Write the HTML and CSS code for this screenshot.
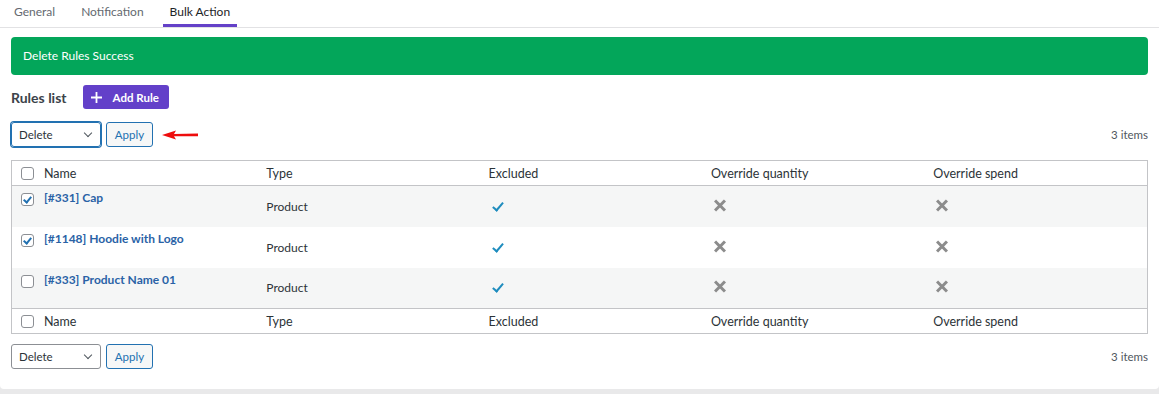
FILE: index.html
```html
<!DOCTYPE html>
<html lang="en">
<head>
  <meta charset="UTF-8" />
  <title>Rules - Bulk Action</title>
  <link rel="stylesheet" href="styles.css">
</head>
<body>

  <div class="panel">
    <nav class="tabs">
      <a class="tab">General</a>
      <a class="tab">Notification</a>
      <a class="tab active">Bulk Action</a>
    </nav>

    <div class="notice">Delete Rules Success</div>

    <div class="list-head">
      <h3>Rules list</h3>
      <button class="add-btn">
        <svg width="11" height="11" viewBox="0 0 11 11"><path d="M5.5 0v11M0 5.5h11" stroke="#fff" stroke-width="1.8"/></svg>
        Add Rule
      </button>
    </div>

    <div class="tablenav">
      <div class="bulk">
        <div class="select focus">Delete <span class="chev"></span></div>
        <button class="apply">Apply</button>
        <svg class="arrow" width="37" height="10" viewBox="0 0 37 10">
          <path d="M0 5 L14 0.5 L12 4 L36 3.5 L36 6.3 L12 6.2 L14 9.5 Z" fill="#ee0d0d"/>
        </svg>
      </div>
      <span class="count">3 items</span>
    </div>

    <table class="rules">
      <thead>
        <tr>
          <th class="cb"><span class="box"></span></th>
          <th>Name</th>
          <th>Type</th>
          <th>Excluded</th>
          <th>Override quantity</th>
          <th>Override spend</th>
        </tr>
      </thead>
      <tbody>
        <tr>
          <td class="cb top"><span class="box checked"></span></td>
          <td class="name"><a>[#331] Cap</a></td>
          <td>Product</td>
          <td class="ic"><span class="yes"></span></td>
          <td class="ic"><span class="no"></span></td>
          <td class="ic"><span class="no"></span></td>
        </tr>
        <tr>
          <td class="cb top"><span class="box checked"></span></td>
          <td class="name"><a>[#1148] Hoodie with Logo</a></td>
          <td>Product</td>
          <td class="ic"><span class="yes"></span></td>
          <td class="ic"><span class="no"></span></td>
          <td class="ic"><span class="no"></span></td>
        </tr>
        <tr>
          <td class="cb top"><span class="box"></span></td>
          <td class="name"><a>[#333] Product Name 01</a></td>
          <td>Product</td>
          <td class="ic"><span class="yes"></span></td>
          <td class="ic"><span class="no"></span></td>
          <td class="ic"><span class="no"></span></td>
        </tr>
      </tbody>
      <tfoot>
        <tr>
          <th class="cb"><span class="box"></span></th>
          <th>Name</th>
          <th>Type</th>
          <th>Excluded</th>
          <th>Override quantity</th>
          <th>Override spend</th>
        </tr>
      </tfoot>
    </table>

    <div class="tablenav bottom">
      <div class="bulk">
        <div class="select">Delete <span class="chev"></span></div>
        <button class="apply">Apply</button>
      </div>
      <span class="count">3 items</span>
    </div>
  </div>

</body>
</html>
```

FILE: styles.css
```css
body {
  margin: 0;
  background: #e9e9ea;
  font-family: Lato, "Noto Sans", sans-serif;
  font-size: 12px;
  color: #2c3338;
}
.panel {
  background: #fff;
  padding: 0 11px 20px;
  border-radius: 0 0 4px 4px;
}
.tabs {
  display: flex;
  gap: 12px;
  height: 28px;
  margin: 0 -11px;
  padding-left: 7px;
  border-bottom: 1px solid #e2e2e4;
  box-sizing: border-box;
}
.tab {
  padding: 0 7px;
  line-height: 24px;
  color: #646970;
  border-bottom: 3px solid transparent;
}
.tab.active {
  color: #1d2327;
  border-bottom-color: #6441c8;
}
.notice {
  margin-top: 9px;
  height: 38px;
  line-height: 38px;
  padding: 0 12px;
  background: #03a65a;
  color: #fff;
  border-radius: 4px;
}
.list-head {
  display: flex;
  align-items: center;
  gap: 16px;
  margin-top: 10px;
  height: 24px;
}
.list-head h3 {
  margin: 0;
  font-size: 14px;
  font-weight: 700;
  color: #3c434a;
}
.add-btn {
  display: flex;
  align-items: center;
  gap: 11px;
  height: 24px;
  padding: 0 10px 0 8px;
  border: none;
  border-radius: 3px;
  background: #6340c9;
  color: #fff;
  font-family: inherit;
  font-size: 11.5px;
  font-weight: 700;
}
.tablenav {
  display: flex;
  justify-content: space-between;
  align-items: center;
  margin-top: 13px;
  height: 25px;
}
.tablenav.bottom {
  margin-top: 10px;
}
.bulk {
  display: flex;
  align-items: center;
  gap: 5px;
}
.select {
  position: relative;
  width: 90px;
  height: 25px;
  line-height: 23px;
  box-sizing: border-box;
  padding-left: 7px;
  border: 1px solid #8c8f94;
  border-radius: 3px;
  font-size: 11.5px;
  color: #2c3338;
}
.select.focus {
  border-color: #2271b1;
  box-shadow: 0 0 0 1px #2271b1;
}
.chev {
  position: absolute;
  right: 9px;
  top: 7px;
  width: 5px;
  height: 5px;
  border-right: 1.3px solid #50575e;
  border-bottom: 1.3px solid #50575e;
  transform: rotate(45deg);
}
.apply {
  width: 47px;
  height: 25px;
  padding: 0;
  border: 1px solid #2271b1;
  border-radius: 3px;
  background: #f6f7f7;
  color: #2271b1;
  font-family: inherit;
  font-size: 11.5px;
}
.arrow {
  margin-left: 4px;
}
.count {
  color: #50575e;
  font-size: 11.5px;
}
.rules {
  margin-top: 13px;
  width: 100%;
  border-collapse: collapse;
  border: 1px solid #c3c4c7;
  table-layout: fixed;
}
.rules th {
  text-align: left;
  font-weight: 400;
  font-size: 12.5px;
  height: 24px;
  padding: 0 8px;
  color: #2c3338;
}
.rules th.cb, .rules td.cb {
  width: 15px;
  padding: 0 0 0 9px;
}
.rules thead tr {
  border-bottom: 1px solid #c3c4c7;
}
.rules tfoot tr {
  border-top: 1px solid #c3c4c7;
}
.rules tbody tr {
  height: 41px;
}
.rules td {
  padding: 0 8px;
  font-size: 12px;
  vertical-align: middle;
}
.rules tbody tr:nth-child(odd) {
  background: #f5f6f6;
}
.rules td.name {
  vertical-align: top;
  padding-top: 4px;
}
.rules td.top {
  vertical-align: top;
  padding-top: 7px;
}
.name a {
  color: #2a62a6;
  font-weight: 700;
  font-size: 12px;
}
.rules td.ic {
  padding-left: 11px;
}
.box {
  display: block;
  width: 11px;
  height: 11px;
  border: 1px solid #8c8f94;
  border-radius: 3px;
  background: #fff;
  position: relative;
}
.rules th .box {
  margin-top: 1px;
}
.box.checked::after {
  content: "";
  position: absolute;
  left: 3px;
  top: 1px;
  width: 3px;
  height: 6px;
  border-right: 2px solid #2271b1;
  border-bottom: 2px solid #2271b1;
  transform: rotate(40deg);
}
.yes {
  display: inline-block;
  width: 4px;
  height: 9px;
  margin-left: 3px;
  border-right: 2.5px solid #1e8cbe;
  border-bottom: 2.5px solid #1e8cbe;
  transform: rotate(40deg);
}
.no {
  display: inline-block;
  position: relative;
  width: 12px;
  height: 12px;
}
.no::before, .no::after {
  content: "";
  position: absolute;
  left: -1px;
  top: 5px;
  width: 14px;
  height: 3px;
  background: #8c8c8c;
  transform: rotate(45deg);
}
.no::after {
  transform: rotate(-45deg);
}
```
